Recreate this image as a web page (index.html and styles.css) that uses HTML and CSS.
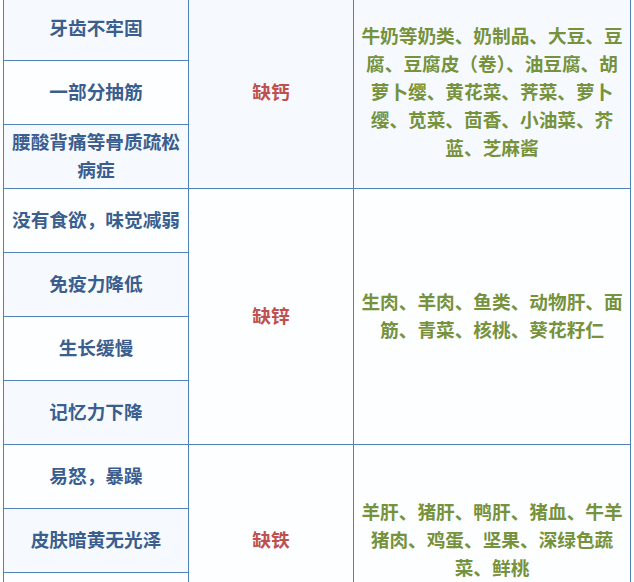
FILE: index.html
```html
<!DOCTYPE html>
<html lang="zh-CN">
<head>
<meta charset="utf-8">
<link rel="stylesheet" href="styles.css">
</head>
<body>
<table class="nutri">
  <colgroup>
    <col class="c-sym">
    <col class="c-def">
    <col class="c-food">
  </colgroup>
  <tbody>
    <tr class="band">
      <td class="sym">牙齿不牢固</td>
      <td class="def" rowspan="3">缺钙</td>
      <td class="food" rowspan="3">牛奶等奶类、奶制品、大豆、豆腐、豆腐皮（卷）、油豆腐、胡萝卜缨、黄花菜、荠菜、萝卜缨、苋菜、茴香、小油菜、芥蓝、芝麻酱</td>
    </tr>
    <tr class="plain"><td class="sym">一部分抽筋</td></tr>
    <tr class="band"><td class="sym">腰酸背痛等骨质疏松病症</td></tr>
    <tr class="plain">
      <td class="sym">没有食欲，味觉减弱</td>
      <td class="def" rowspan="4">缺锌</td>
      <td class="food" rowspan="4">生肉、羊肉、鱼类、动物肝、面筋、青菜、核桃、葵花籽仁</td>
    </tr>
    <tr class="band"><td class="sym">免疫力降低</td></tr>
    <tr class="plain"><td class="sym">生长缓慢</td></tr>
    <tr class="band"><td class="sym">记忆力下降</td></tr>
    <tr class="plain">
      <td class="sym">易怒，暴躁</td>
      <td class="def" rowspan="3">缺铁</td>
      <td class="food" rowspan="3">羊肝、猪肝、鸭肝、猪血、牛羊猪肉、鸡蛋、坚果、深绿色蔬菜、鲜桃</td>
    </tr>
    <tr class="band"><td class="sym">皮肤暗黄无光泽</td></tr>
    <tr class="plain"><td class="sym"></td></tr>
  </tbody>
</table>
</body>
</html>
```

FILE: styles.css
```css
html, body {
  margin: 0;
  padding: 0;
  background: #ffffff;
}

body {
  font-family: "Noto Sans CJK SC", "Noto Sans", sans-serif;
}

.nutri {
  border-collapse: collapse;
  table-layout: fixed;
  width: 627px;
  margin: -4px 0 0 3px;
  font-size: 18.67px;
  font-weight: bold;
  line-height: 28px;
}

.c-sym { width: 185px; }
.c-def { width: 165px; }
.c-food { width: 277px; }

.nutri tr {
  height: 64px;
}

.nutri td {
  border: 1px solid #4f81bd;
  text-align: center;
  vertical-align: middle;
  padding: 0 5px 4px;
}

.band td {
  background: #f6faff;
}

.plain td {
  background: #fdfeff;
}

.sym {
  color: #3b5e8e;
}

.nutri td.sym {
  padding-left: 2px;
  padding-right: 2px;
}

.def {
  color: #c0504d;
}

.food {
  color: #76923c;
}
```
